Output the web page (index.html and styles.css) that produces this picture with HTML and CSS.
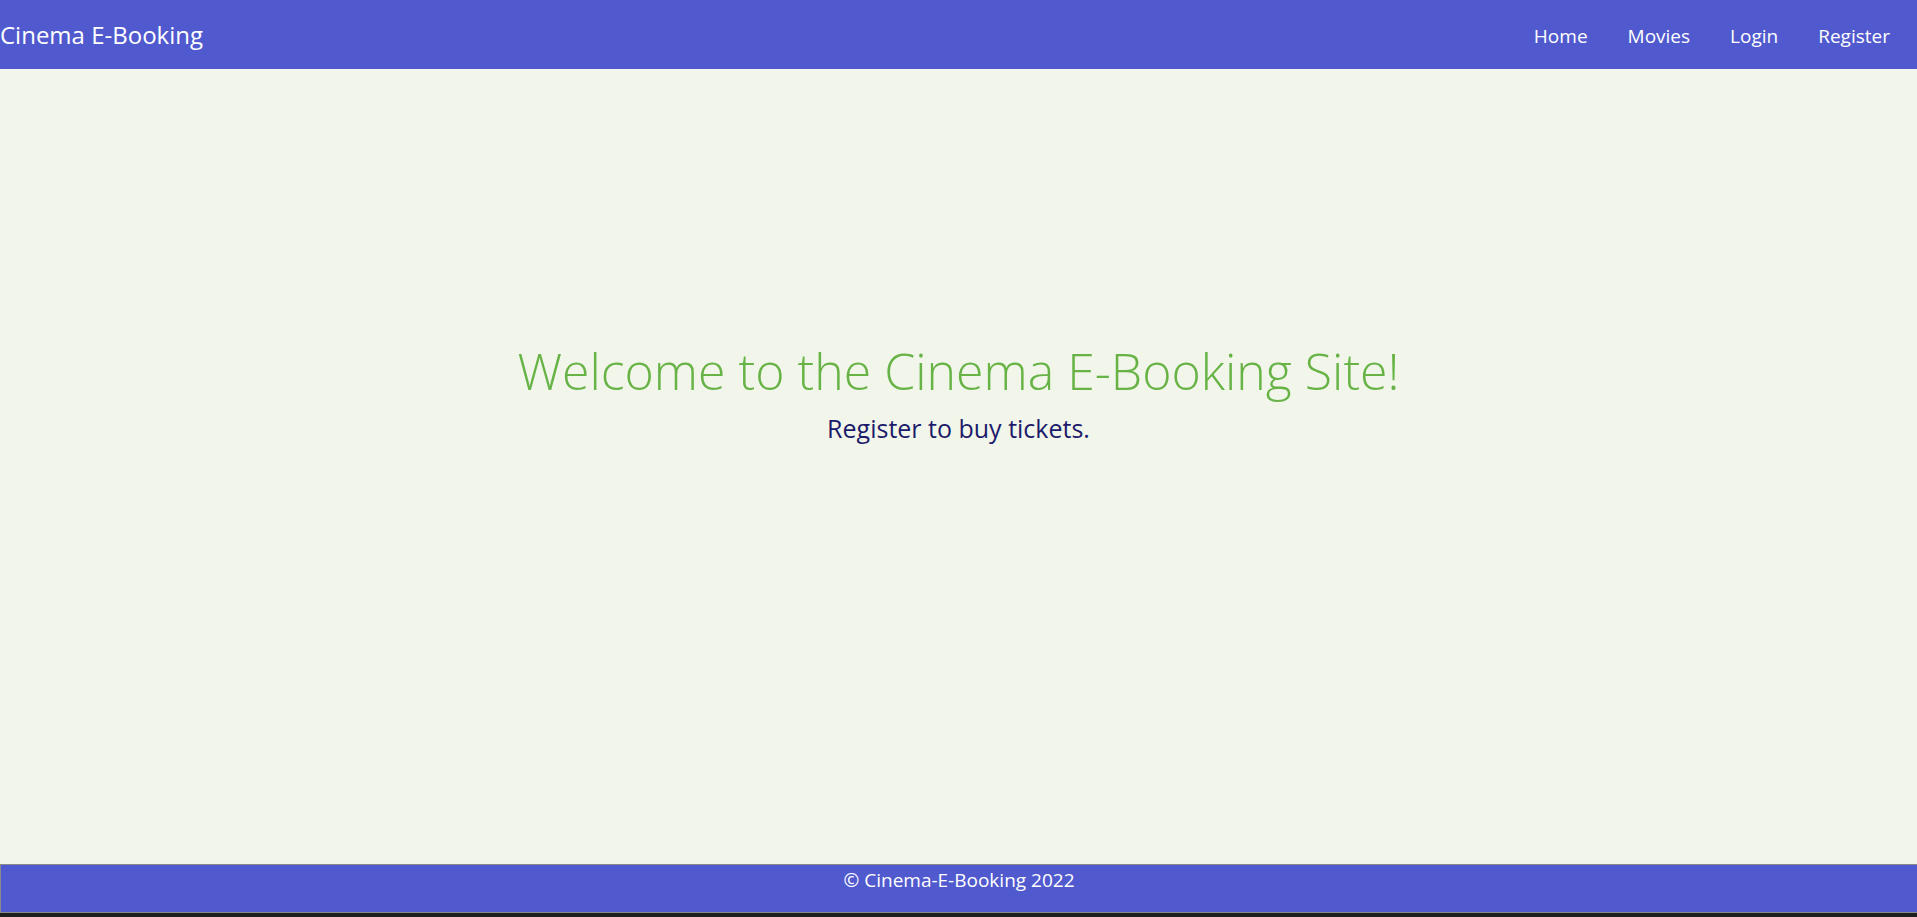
FILE: index.html
```html
<!DOCTYPE html>
<html lang="en">
<head>
<meta charset="utf-8">
<title>Cinema E-Booking</title>
<link rel="stylesheet" href="styles.css">
</head>
<body>
<div class="page">
  <header class="navbar">
    <a class="brand" href="#">Cinema E-Booking</a>
    <nav class="nav">
      <a class="nav-link" href="#">Home</a>
      <a class="nav-link" href="#">Movies</a>
      <a class="nav-link" href="#">Login</a>
      <a class="nav-link last" href="#">Register</a>
    </nav>
  </header>
  <main class="hero">
    <h1 class="hero-title">Welcome to the Cinema E-Booking Site!</h1>
    <p class="hero-lead">Register to buy tickets.</p>
  </main>
  <footer class="footer">© Cinema-E-Booking 2022</footer>
  <div class="edge"></div>
</div>
</body>
</html>
```

FILE: styles.css
```css
html, body {
  margin: 0;
  padding: 0;
  height: 100%;
}
body {
  font-family: "Open Sans", "Noto Sans", sans-serif;
  background: #f2f6ea;
  overflow: hidden;
}
.page {
  display: flex;
  flex-direction: column;
  height: 100vh;
}
.navbar {
  display: flex;
  align-items: center;
  justify-content: space-between;
  height: 69px;
  background: #5059cd;
  flex: none;
}
.brand {
  color: #ffffff;
  text-decoration: none;
  font-size: 24px;
  line-height: 1.5;
  padding-top: 1px;
}
.nav {
  display: flex;
  padding-right: 27px;
  padding-top: 3px;
}
.nav-link {
  color: #ffffff;
  text-decoration: none;
  font-size: 19px;
  line-height: 1.5;
  padding: 0 20px;
}
.nav-link.last {
  padding-right: 0;
}
.hero {
  flex: 1;
  display: flex;
  flex-direction: column;
  align-items: center;
  justify-content: center;
  padding-bottom: 144px;
}
.hero-title {
  margin: 0;
  font-size: 50px;
  font-weight: 350;
  color: #67b346;
  line-height: 1.2;
}
.hero-lead {
  margin: 9px 0 0;
  font-size: 25px;
  color: #1c1a6b;
  line-height: 1.5;
}
.footer {
  flex: none;
  height: 47px;
  background: #5059cd;
  border: 1px solid #8a8a8a;
  border-right: none;
  color: #ffffff;
  font-size: 19px;
  line-height: 1.6;
  text-align: center;
}
.edge {
  flex: none;
  height: 4px;
  background: #1e1e1e;
}
```
